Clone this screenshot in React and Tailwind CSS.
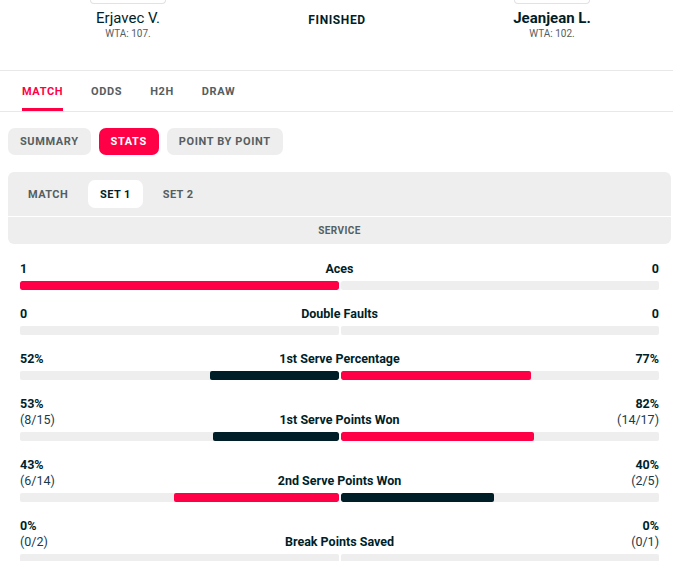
import React from "react";

const RED = "#ff0046";
const DARK = "#001e28";

const stats = [
  { label: "Aces", l: "1", r: "0", lv: 1, rv: 0 },
  { label: "Double Faults", l: "0", r: "0", lv: 0, rv: 0 },
  { label: "1st Serve Percentage", l: "52%", r: "77%", lv: 52, rv: 77 },
  { label: "1st Serve Points Won", l: "53%", r: "82%", ls: "(8/15)", rs: "(14/17)", lv: 53, rv: 82 },
  { label: "2nd Serve Points Won", l: "43%", r: "40%", ls: "(6/14)", rs: "(2/5)", lv: 43, rv: 40 },
  { label: "Break Points Saved", l: "0%", r: "0%", ls: "(0/2)", rs: "(0/1)", lv: 0, rv: 0 },
];

function StatRow({ s }) {
  const sum = s.lv + s.rv;
  const lw = sum ? (s.lv / sum) * 100 : 0;
  const rw = sum ? (s.rv / sum) * 100 : 0;
  const lc = s.lv >= s.rv ? RED : DARK;
  const rc = s.rv >= s.lv ? RED : DARK;
  const two = !!s.ls;
  return (
    <div className="flex flex-col">
      <div className="flex items-end justify-between text-[12.5px] leading-[16px] text-[#001e28]">
        <div className="flex w-[120px] flex-col items-start">
          <span className="font-bold">{s.l}</span>
          {two && <span className="text-[#1a3a4a]">{s.ls}</span>}
        </div>
        <span className="font-bold">{s.label}</span>
        <div className="flex w-[120px] flex-col items-end">
          <span className="font-bold">{s.r}</span>
          {two && <span className="text-[#1a3a4a]">{s.rs}</span>}
        </div>
      </div>
      <div className="mt-[4px] flex gap-[2px]">
        <div className="flex h-[9px] flex-1 justify-end overflow-hidden rounded-[2px] bg-[#eeeeee]">
          {lw > 0 && <div className="h-full rounded-[2px]" style={{ width: `${lw}%`, background: lc }} />}
        </div>
        <div className="flex h-[9px] flex-1 justify-start overflow-hidden rounded-[2px] bg-[#eeeeee]">
          {rw > 0 && <div className="h-full rounded-[2px]" style={{ width: `${rw}%`, background: rc }} />}
        </div>
      </div>
    </div>
  );
}

export default function App() {
  return (
    <div className="w-full overflow-hidden bg-white font-['Roboto',sans-serif] text-[#001e28]">
      {/* Header */}
      <div className="grid h-[71px] grid-cols-[256px_162px_1fr] border-b border-[#e8e8e8]">
        <div className="flex flex-col items-center">
          <div className="h-[4px] w-[76px] rounded-b-[8px] border-x border-b border-[#e2e2e2]" />
          <div className="mt-[5px] text-[15px] leading-[18px] text-[#001e28]">Erjavec V.</div>
          <div className="text-[10px] leading-[14px] text-[#555e61]">WTA: 107.</div>
        </div>
        <div className="flex flex-col items-center pt-[12px]">
          <div className="text-[12px] font-bold leading-[17px] tracking-[0.6px] text-[#001e28]">FINISHED</div>
        </div>
        <div className="flex flex-col items-center pl-[13px]">
          <div className="h-[4px] w-[76px] rounded-b-[8px] border-x border-b border-[#e2e2e2]" />
          <div className="mt-[5px] text-[15px] font-bold leading-[18px] text-[#001e28]">Jeanjean L.</div>
          <div className="text-[10px] leading-[14px] text-[#555e61]">WTA: 102.</div>
        </div>
      </div>

      {/* Main tabs */}
      <div className="flex h-[41px] gap-[28px] border-b border-[#e8e8e8] pl-[22px]">
        {["MATCH", "ODDS", "H2H", "DRAW"].map((t, i) => (
          <div
            key={t}
            className={`flex h-[40px] items-center pt-[5px] text-[11px] font-bold tracking-[0.6px] ${
              i === 0 ? "border-b-[3px] border-[#ff0046] text-[#ff0046]" : "border-b-[3px] border-transparent text-[#555e61]"
            }`}
          >
            {t}
          </div>
        ))}
      </div>

      {/* Pills */}
      <div className="mt-[16px] flex gap-[8px] pl-[8px]">
        <div className="flex h-[27px] items-center rounded-[7px] bg-[#eeeeee] px-[12px] pt-[2px] text-[11px] font-bold tracking-[0.6px] text-[#555e61]">SUMMARY</div>
        <div className="flex h-[27px] items-center rounded-[7px] bg-[#ff0046] px-[12px] pt-[2px] text-[11px] font-bold tracking-[0.6px] text-white">STATS</div>
        <div className="flex h-[27px] items-center rounded-[7px] bg-[#eeeeee] px-[12px] pt-[2px] text-[11px] font-bold tracking-[0.6px] text-[#555e61]">POINT BY POINT</div>
      </div>

      {/* Set tabs */}
      <div className="ml-[8px] mr-[2px] mt-[17px] flex flex-col gap-[1px]">
        <div className="flex h-[44px] items-center gap-[8px] rounded-t-[6px] bg-[#eeeeee] px-[8px]">
          <div className="flex h-[28px] items-center rounded-[7px] px-[12px] pt-[2px] text-[11px] font-bold tracking-[0.4px] text-[#555e61]">MATCH</div>
          <div className="flex h-[28px] items-center rounded-[7px] bg-white px-[12px] pt-[2px] text-[11px] font-bold tracking-[0.4px] text-[#001e28]">SET 1</div>
          <div className="flex h-[28px] items-center rounded-[7px] px-[12px] pt-[2px] text-[11px] font-bold tracking-[0.4px] text-[#555e61]">SET 2</div>
        </div>
        <div className="flex h-[27px] items-center justify-center rounded-b-[6px] bg-[#eeeeee] text-[10px] font-bold tracking-[0.4px] text-[#555e61]">
          SERVICE
        </div>
      </div>

      {/* Stats */}
      <div className="ml-[20px] mt-[17px] flex w-[639px] flex-col gap-[16px] pb-[20px]">
        {stats.map((s) => (
          <StatRow key={s.label} s={s} />
        ))}
      </div>
    </div>
  );
}
